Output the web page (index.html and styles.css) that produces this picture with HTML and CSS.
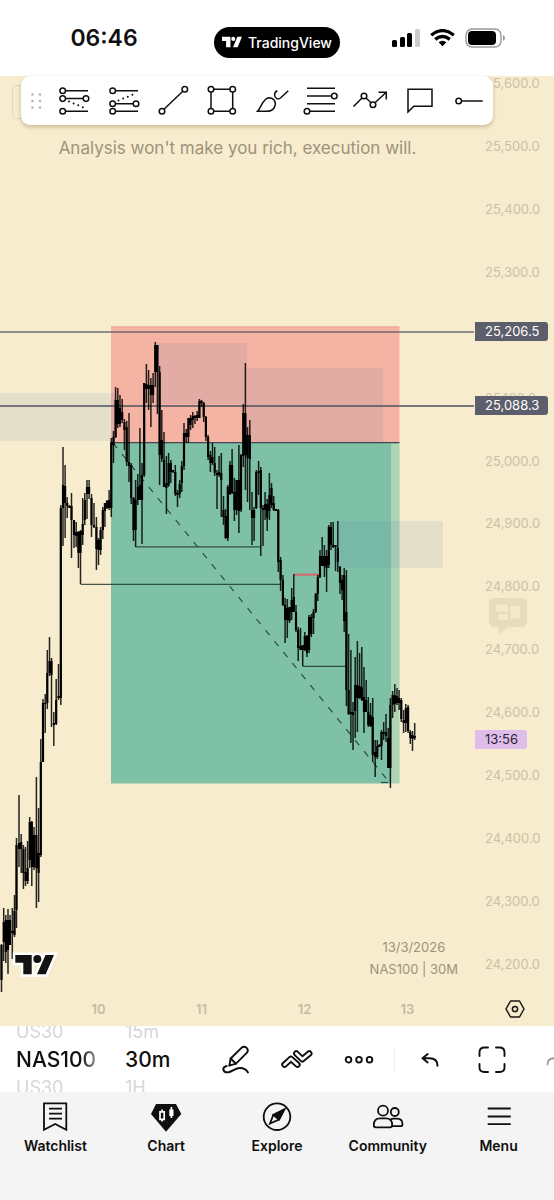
FILE: index.html
```html
<!DOCTYPE html>
<html lang="en">
<head>
    <meta charset="UTF-8">
    <meta name="viewport" content="width=device-width, initial-scale=1.0">
    <title>NAS100 30m</title>
    <link rel="stylesheet" href="styles.css">
</head>
<body>
    <header class="status-bar">
        <div class="clock">06:46</div>
        <div class="island">
            <svg width="20" height="12" viewBox="0 0 39 20" fill="#fff">
                <path d="M0 0H16.500V20H8V8H0Z"/>
                <circle cx="22" cy="4" r="4"/>
                <path d="M30 0H39L30.500 20H21.500Z"/>
            </svg>
            <span>TradingView</span>
        </div>
        <div class="signals">
            <svg width="28" height="18" viewBox="0 0 28 18">
                <rect x="0" y="11" width="5" height="7" rx="1.500"/>
                <rect x="8" y="8" width="5" height="10" rx="1.500"/>
                <rect x="15" y="4" width="5" height="14" rx="1.500"/>
                <rect x="23" y="0" width="5" height="18" rx="1.500" fill="#ccc"/>
            </svg>
            <svg width="25" height="18" viewBox="0 0 25 18" fill="none" stroke="#000" stroke-width="3.300">
                <path d="M1.200 6.200Q12.500 -3 23.800 6.200"/>
                <path d="M5.200 10.400Q12.500 4.600 19.800 10.400"/>
                <path d="M8.600 13.300Q12.500 10.200 16.400 13.300L12.500 17.300Z" fill="#000" stroke="none"/>
            </svg>
            <svg width="40" height="20" viewBox="0 0 40 20">
                <rect x="1" y="1" width="35" height="18" rx="6" fill="none" stroke="#999" stroke-width="1.400"/>
                <rect x="3" y="3" width="28" height="14" rx="4"/>
                <path d="M38 7Q40 8 40 10T38 13Z" fill="#999"/>
            </svg>
        </div>
    </header>

    <main class="chart">
        <div class="plot">
            <svg class="plot-canvas" viewBox="0 76 475 916">
                <!-- short position -->
                <rect x="111" y="326.500" width="288.500" height="116" fill="#f5b3a3"/>
                <path d="M111 327H399.500" stroke="#f3a093"/>
                <rect x="111" y="443" width="280" height="340.500" fill="#7fc1a6"/>
                <rect x="391" y="443" width="8.500" height="340.500" fill="#aed4b6"/>
                <!-- supply zones -->
                <g fill="rgb(60, 110, 170)" fill-opacity="0.1">
                    <rect x="0" y="393" width="115" height="48"/>
                    <rect x="157" y="343" width="90" height="61"/>
                    <rect x="247" y="368" width="136" height="74"/>
                    <rect x="338" y="521" width="105" height="47"/>
                </g>
                <!-- levels -->
                <path d="M0 332H474" stroke="#50505e" stroke-opacity="0.800" stroke-width="1.600"/>
                <path d="M0 406H474" stroke="#50505e" stroke-width="1.300"/>
                <path d="M111 442.600H399.500" stroke="#434651" stroke-width="1.300"/>
                <path d="M80.500 584.300H281M135.500 546.800H261M302.700 666.300H346" fill="none" stroke="#1b3129" stroke-opacity="0.800" stroke-width="1.200"/>
                <path d="M294 574.600H319" stroke="#cf6a70" stroke-width="2.200"/>
                <path d="M113 443L390 783" stroke="#2c4d43" stroke-width="1.200" stroke-dasharray="6.500 7.700"/>
                <path d="M381 782.500H388" stroke="#2c4d43" stroke-width="1.200"/>
                <path id="wicks" fill="none" stroke="#000" stroke-opacity="0.850" stroke-width="1.500"/>
                <path id="bodies" fill="none" stroke="#000" stroke-width="2.200"/>
                <!-- logo -->
                <g stroke-linejoin="miter">
                    <path d="M15.300 955H31.700V974.300H23.300V962.700H15.300ZM45.500 955H54L45.700 974.300H37Z" fill="#fff" stroke="#fff" stroke-width="5"/>
                    <circle cx="37.300" cy="959" r="6.500" fill="#fff"/>
                    <path d="M15.300 955H31.700V974.300H23.300V962.700H15.300ZM45.500 955H54L45.700 974.300H37Z" fill="#131313"/>
                    <circle cx="37.300" cy="959" r="4" fill="#131313"/>
                </g>
            </svg>
            <p class="motto">Analysis won't make you rich, execution will.</p>
            <p class="stamp">13/3/2026<br>NAS100 | 30M</p>
        </div>

        <div class="price-axis">
            <ul class="prices">
                <li>25,600.0</li>
                <li>25,500.0</li>
                <li>25,400.0</li>
                <li>25,300.0</li>
                <li>25,200.0</li>
                <li>25,100.0</li>
                <li>25,000.0</li>
                <li>24,900.0</li>
                <li>24,800.0</li>
                <li>24,700.0</li>
                <li>24,600.0</li>
                <li>24,500.0</li>
                <li>24,400.0</li>
                <li>24,300.0</li>
                <li>24,200.0</li>
            </ul>
            <span class="tag tag-high">25,206.5</span>
            <span class="tag tag-low">25,088.3</span>
            <span class="tag tag-countdown">13:56</span>
            <button class="ideas" aria-label="Ideas">
                <svg width="38" height="36" viewBox="0 0 38 36">
                    <path d="M6 0H32Q38 0 38 6V23Q38 29 32 29H19L11 36L8.500 29H6Q0 29 0 23V6Q0 0 6 0Z" fill="#e7dcbe"/>
                    <path d="M7 6.500H19V13.500H7ZM21.500 8H31V20.500H21.500ZM9.500 16H19V22H9.500Z" fill="#f4e9cb"/>
                </svg>
            </button>
        </div>

        <div class="time-axis">
            <span>10</span>
            <span>11</span>
            <span>12</span>
            <span>13</span>
        </div>
        <button class="axis-settings" aria-label="Chart settings">
            <svg width="20" height="18" viewBox="0 0 20 18" fill="none" stroke="#1a1710" stroke-width="1.500">
                <path d="M5.500 1H14.500L19 9L14.500 17H5.500L1 9Z" stroke-linejoin="round"/>
                <circle cx="10" cy="9" r="2.600"/>
            </svg>
        </button>

        <div class="ghost"></div>
        <div class="draw-tools">
            <svg class="grip" width="10" height="16" viewBox="0 0 10 16" fill="#b5b5b5">
                <circle cx="1.500" cy="1.500" r="1.300"/><circle cx="9" cy="1.500" r="1.300"/>
                <circle cx="1.500" cy="8" r="1.300"/><circle cx="9" cy="8" r="1.300"/>
                <circle cx="1.500" cy="14.500" r="1.300"/><circle cx="9" cy="14.500" r="1.300"/>
            </svg>
            <button class="tool" aria-label="Short position">
                <svg viewBox="0 0 32 32">
                    <path d="M7.500 5.700H30M7.500 13.600H25.200M7.500 26.300H30"/>
                    <path d="M11 16.500L29 24" class="dots"/>
                    <circle cx="4.700" cy="5.700" r="2.800"/><circle cx="4.700" cy="13.600" r="2.800"/>
                    <circle cx="28" cy="13.600" r="2.800"/><circle cx="4.700" cy="26.300" r="2.800"/>
                </svg>
            </button>
            <button class="tool" aria-label="Long position">
                <svg viewBox="0 0 32 32">
                    <path d="M7.500 5.700H30M7.500 18.700H25.200M7.500 26.300H30"/>
                    <path d="M10.500 15.500L29 8" class="dots"/>
                    <circle cx="4.700" cy="5.700" r="2.800"/><circle cx="4.700" cy="18.700" r="2.800"/>
                    <circle cx="28" cy="18.700" r="2.800"/><circle cx="4.700" cy="26.300" r="2.800"/>
                </svg>
            </button>
            <button class="tool" aria-label="Trend line">
                <svg viewBox="0 0 32 32">
                    <path d="M7 24.300L25.800 6.300"/>
                    <circle cx="5" cy="26.300" r="2.800"/><circle cx="27.800" cy="4.300" r="2.800"/>
                </svg>
            </button>
            <button class="tool" aria-label="Rectangle">
                <svg viewBox="0 0 32 32">
                    <path d="M7.800 4.300H24M7.800 26.300H24M5 7.100V23.500M26.700 7.100V23.500"/>
                    <circle cx="5" cy="4.300" r="2.800"/><circle cx="26.700" cy="4.300" r="2.800"/>
                    <circle cx="5" cy="26.300" r="2.800"/><circle cx="26.700" cy="26.300" r="2.800"/>
                </svg>
            </button>
            <button class="tool" aria-label="Brush">
                <svg viewBox="0 0 32 32">
                    <path d="M1.500 26.300C5.500 22 7 13 13 12.700C17 12.700 19.800 16 19.300 19.500C18.500 24 15 26.300 11 26.300Z"/>
                    <path d="M21.300 5.700C17.500 7.500 18 12 20.800 13.600Q22.500 14.600 24.500 13L32.300 5.700"/>
                </svg>
            </button>
            <button class="tool" aria-label="Fib retracement">
                <svg viewBox="0 0 32 32">
                    <path d="M2 3.300H30M2 11H26.500M2 18.700H30M4.800 26.300H30"/>
                    <circle cx="29.300" cy="11" r="2.800"/><circle cx="2" cy="26.300" r="2.800"/>
                </svg>
            </button>
            <button class="tool" aria-label="Path">
                <svg viewBox="0 0 32 32">
                    <path d="M-0.500 21.500L8 13M12 13L17 17.700M21 17.700L32 7.500M24.500 7.300H32.300V14.500"/>
                    <circle cx="10" cy="11" r="2.800"/><circle cx="19" cy="19.700" r="2.800"/>
                </svg>
            </button>
            <button class="tool" aria-label="Comment">
                <svg viewBox="0 0 32 32">
                    <path d="M4 4.300H28V21.300H9.800L4 27Z"/>
                </svg>
            </button>
            <button class="tool" aria-label="Horizontal ray">
                <svg viewBox="0 0 32 32">
                    <path d="M8.500 16H29.700"/>
                    <circle cx="5.700" cy="16" r="2.800"/>
                </svg>
            </button>
        </div>
    </main>

    <section class="bottom-tools">
        <div class="wheel wheel-symbol">
            <span>US30</span>
            <strong>NAS100</strong>
            <span>US30</span>
        </div>
        <div class="wheel wheel-interval">
            <span>15m</span>
            <strong>30m</strong>
            <span>1H</span>
        </div>
        <button class="action" aria-label="Draw">
            <svg viewBox="0 0 32 32">
                <path d="M10.300 21.700L11.700 14.500L22.700 3.600Q25.200 1.700 27.700 3.900Q29.800 6.200 28 8.700L17 19.700Z"/>
                <path d="M11.700 14.500L17 19.700"/>
                <path d="M7.700 22Q4 23 4.300 25.500Q5 29 9.500 28.300C14 27.500 16 24 21 24Q26.500 24 29 28.500"/>
            </svg>
        </button>
        <button class="action" aria-label="Indicators">
            <svg viewBox="0 0 32 32" class="chevrons">
                <path d="M3.500 20.700L9.900 14.800L16.500 20.700" class="outer"/>
                <path d="M3.500 20.700L9.900 14.800L16.500 20.700" class="inner"/>
                <path d="M15.300 9.500L21.300 15.300L28.300 9.500" class="outer"/>
                <path d="M15.300 9.500L21.300 15.300L28.300 9.500" class="inner"/>
            </svg>
        </button>
        <button class="action" aria-label="More">
            <svg viewBox="0 0 32 32">
                <circle cx="5.500" cy="15.700" r="2.800"/><circle cx="16" cy="15.700" r="2.800"/><circle cx="26.500" cy="15.700" r="2.800"/>
            </svg>
        </button>
        <div class="divider"></div>
        <button class="action" aria-label="Undo">
            <svg viewBox="0 0 32 32">
                <path d="M13.700 10L8.500 14.300L13.700 18.500M8.500 14.300H15.500Q23.500 14.300 23.500 21.800"/>
            </svg>
        </button>
        <button class="action" aria-label="Full screen">
            <svg viewBox="0 0 32 32">
                <path d="M3.500 12V8.500Q3.500 3.500 8.500 3.500H12M20 3.500H23.500Q28.500 3.500 28.500 8.500V12M28.500 20V23.500Q28.500 28 23.500 28H20M12 28H8.500Q3.500 28 3.500 23.500V20"/>
            </svg>
        </button>
        <button class="action action-fade" aria-label="Redo">
            <svg viewBox="0 0 32 32">
                <path d="M18.300 10L23.500 14.300L18.300 18.500M23.500 14.300H16.500Q9.500 14.300 9.500 20.500"/>
            </svg>
        </button>
    </section>

    <nav class="tabs">
        <a href="#watchlist" class="tab">
            <svg viewBox="0 0 32 32">
                <path d="M5 2.300H27.300V28.700L16.200 23L5 28.700Z"/>
                <path d="M10 7.700H23M10 12.700H23M10 17.700H23"/>
            </svg>
            <span>Watchlist</span>
        </a>
        <a href="#chart" class="tab">
            <svg viewBox="0 0 32 32">
                <path d="M6 3H26L31.300 13L16 30.700L1 13Z" fill="#0f0f0f" stroke="none"/>
                <path d="M10 10.800H14.200V18.300H10ZM12.100 8.500V10.800M12.100 18.300V20.600M21.400 6V17" stroke="#fff" stroke-width="1.700"/>
                <rect x="19.300" y="8.500" width="4.200" height="6.500" fill="#fff" stroke="none"/>
            </svg>
            <span>Chart</span>
        </a>
        <a href="#explore" class="tab">
            <svg viewBox="0 0 32 32">
                <circle cx="16" cy="15.700" r="13.300"/>
                <path d="M23.200 8.500L12.300 14L9 22.500L18 18.500Z"/>
                <path d="M23.200 8.500L12.300 14L18 18.500Z" fill="#0f0f0f"/>
            </svg>
            <span>Explore</span>
        </a>
        <a href="#community" class="tab">
            <svg viewBox="0 0 32 32">
                <circle cx="11" cy="9.700" r="5"/>
                <circle cx="22.800" cy="11" r="4"/>
                <path d="M8 17.300H14Q20.200 17.300 20.200 24Q20.200 26.300 18 26.300H4Q1.800 26.300 1.800 24Q1.800 17.300 8 17.300Z"/>
                <path d="M18.500 18.500Q20 17.700 21.500 17.700H25Q30.500 17.700 30.500 23.200Q30.500 25.200 28.500 25.200H20"/>
            </svg>
            <span>Community</span>
        </a>
        <a href="#menu" class="tab">
            <svg viewBox="0 0 32 32">
                <path d="M4.700 7.500H27.700M4.700 15.500H27.700M4.700 23.200H27.700"/>
            </svg>
            <span>Menu</span>
        </a>
    </nav>

    <script src="chart.js"></script>
</body>
</html>
```
FILE: styles.css
```css
* {
    box-sizing: border-box;
}

body {
    margin: 0;
    min-height: 100vh;
    display: flex;
    flex-direction: column;
    font-family: Inter, "Liberation Sans", sans-serif;
    background: #f4f4f4;
    color: #0f0f0f;
}

button {
    padding: 0;
    border: none;
    background: none;
    color: inherit;
    font: inherit;
    cursor: pointer;
}

svg {
    display: block;
}

/* Status bar */
.status-bar {
    display: grid;
    grid-template-columns: 1fr auto 1fr;
    align-items: center;
    height: 76px;
    background: #fff;
}

.clock {
    padding-right: 6px;
    text-align: center;
    font-size: 23px;
    font-weight: 600;
}

.island {
    display: flex;
    align-items: center;
    gap: 6px;
    height: 31px;
    margin-top: 8px;
    padding: 0 8px;
    border-radius: 16px;
    background: #000;
    color: #fff;
    font-size: 14px;
    font-weight: 500;
}

.signals {
    display: flex;
    align-items: center;
    justify-content: center;
    gap: 10px;
    padding-left: 4px;
}

/* Chart */
.chart {
    position: relative;
    display: grid;
    grid-template-columns: 1fr 79px;
    background: #f7eccd;
}

.plot {
    position: relative;
}

.plot-canvas {
    width: 100%;
    height: auto;
}

.motto,
.stamp {
    position: absolute;
    margin: 0;
    text-align: center;
    color: #9d937b;
}

.motto {
    top: 61px;
    left: 0;
    right: 0;
    font-size: 17px;
    line-height: 22px;
}

.stamp {
    right: 17px;
    bottom: 12px;
    font-size: 13px;
    line-height: 22px;
}

.price-axis {
    position: relative;
}

.prices {
    display: flex;
    flex-direction: column;
    justify-content: space-between;
    height: 100%;
    margin: 0;
    padding: 0 0 21px 10px;
    list-style: none;
    color: #cbc1a5;
    font-size: 13px;
    line-height: 14px;
}

.tag {
    position: absolute;
    left: 0;
    height: 19px;
    padding: 0 9px 0 10px;
    border-radius: 0 3px 3px 0;
    background: #5d5e6b;
    color: #fff;
    font-size: 13px;
    line-height: 18px;
}

.tag-high {
    top: 246px;
}

.tag-low {
    top: 320px;
}

.tag-countdown {
    top: 654px;
    background: #dfbdea;
    color: #2a2430;
}

.ideas {
    position: absolute;
    top: 522px;
    left: 14px;
}

.time-axis {
    display: grid;
    grid-template-columns: repeat(4, 1fr);
    align-items: center;
    height: 34px;
    padding: 0 16px 0 47px;
    text-align: center;
    color: #c6bc9f;
    font-size: 13px;
    font-weight: 600;
}

.axis-settings {
    display: flex;
    align-items: center;
    justify-content: center;
}

/* Drawing toolbar */
.ghost {
    position: absolute;
    top: 9px;
    left: 12px;
    width: 40px;
    height: 34px;
    border: 1px solid #e0d7be;
    border-radius: 5px;
}

.draw-tools {
    position: absolute;
    top: 0;
    left: 21px;
    right: 61px;
    display: flex;
    align-items: center;
    justify-content: space-between;
    height: 49px;
    padding: 0 8px 0 10px;
    border-radius: 9px;
    background: #fff;
    box-shadow: 0 2px 4px rgba(90, 75, 30, 0.3);
}

.tool svg,
.action svg,
.tab svg {
    width: 32px;
    height: 32px;
    overflow: visible;
    fill: none;
    stroke: #0f0f0f;
    stroke-width: 1.4;
}

.tool svg {
    stroke-width: 1.5;
}

.tool .dots {
    stroke-width: 2;
    stroke-linecap: round;
    stroke-dasharray: 0 5;
}

/* Bottom toolbar */
.bottom-tools {
    display: flex;
    align-items: center;
    height: 66px;
    padding: 2px 0 0 16px;
    overflow: hidden;
    background: #fff;
}

.wheel {
    display: flex;
    flex-direction: column;
    line-height: 28px;
}

.wheel span {
    color: #d6d6d6;
    font-size: 18px;
}

.wheel strong {
    font-size: 21px;
    font-weight: 500;
}

.wheel-symbol {
    flex: 0 0 81px;
    margin-right: 28px;
    overflow: hidden;
    -webkit-mask-image: linear-gradient(90deg, #000 80%, rgba(0, 0, 0, 0.4));
    mask-image: linear-gradient(90deg, #000 80%, rgba(0, 0, 0, 0.4));
}

.wheel-interval {
    flex: 1 0 78px;
}

.action {
    display: flex;
    flex: 0 0 62px;
    justify-content: center;
}

.action svg {
    stroke-width: 1.9;
    stroke-linecap: round;
    stroke-linejoin: round;
}

.chevrons .outer {
    stroke-width: 6.4;
}

.chevrons .inner {
    stroke: #fff;
    stroke-width: 2.6;
}

.divider {
    flex: 0 0 1px;
    height: 24px;
    margin: 0 4px;
    background: #ededed;
}

.action-fade {
    margin-right: -31px;
    opacity: 0.4;
}

/* Tabs */
.tabs {
    display: grid;
    grid-template-columns: repeat(5, 1fr);
    padding: 9px 0 44px;
}

.tab {
    display: flex;
    flex-direction: column;
    align-items: center;
    gap: 3px;
    color: inherit;
    font-size: 14px;
    font-weight: 600;
    line-height: 20px;
    text-decoration: none;
}

.tab svg {
    stroke-width: 1.8;
}
```
FILE: chart.js
```js
// x, high, low, body top, body bottom
const candles = [
    [1.5, 944, 992, 945, 980], [3.7, 908, 961, 922, 942], [5.8, 915, 963, 920, 952], [8, 909, 974, 920, 950],
    [10, 915, 943, 920, 945], [12.3, 908, 959, 931, 933], [14.5, 895, 937, 911, 935], [16.5, 838, 928, 845, 910],
    [19, 795, 867, 843, 849], [21.2, 834, 873, 842, 849], [23.4, 845, 889, 849, 873], [25.5, 847, 886, 872, 881],
    [27.6, 841, 884, 868, 881], [29.7, 817, 868, 822, 860], [31.8, 821, 886, 822, 867], [34, 827, 870, 835, 867],
    [36.4, 777, 908, 835, 868], [38.6, 808, 902, 853, 873], [40.8, 739, 857, 762, 855], [43, 699, 762, 703, 762],
    [45.2, 694, 733, 703, 704], [47.3, 650, 709, 673, 703], [49.5, 637, 676, 661, 673], [51.5, 658, 727, 661, 675],
    [53.8, 712, 746, 723, 725], [56.2, 679, 725, 700, 724], [58.5, 664, 700, 696, 698], [60.8, 505, 705, 508, 698],
    [63, 447, 546, 485, 508], [65.1, 465, 538, 486, 503], [67.2, 497, 518, 503, 506], [69.4, 505, 508, 506, 508],
    [71.5, 493, 558, 506, 520], [74, 520, 548, 520, 535], [76.2, 522, 547, 532, 536], [78.4, 531, 568, 532, 553],
    [80.5, 530, 584, 531, 553], [82.7, 498, 545, 524, 535], [84.8, 493, 525, 500, 520], [87, 480, 519, 487, 494],
    [89.1, 480, 499, 487, 494], [91.5, 494, 537, 498, 525], [94, 503, 528, 525, 527], [96.4, 517, 570, 527, 549],
    [98.5, 538, 565, 540, 550], [100.6, 527, 555, 530, 550], [102.8, 507, 539, 510, 530], [104.9, 503, 527, 503, 511],
    [107, 500, 509, 501, 508], [109.1, 490, 510, 500, 508], [111.3, 438, 517, 442, 508], [113.5, 431, 463, 437, 445],
    [115.6, 387, 438, 400, 437], [117.8, 388, 428, 400, 424], [120, 395, 427, 408, 424], [122.2, 399, 423, 412, 420],
    [124.4, 419, 450, 422, 430], [126.7, 421, 466, 427, 462], [129, 413, 482, 462, 466], [131.2, 463, 504, 465, 498],
    [133.5, 497, 541, 498, 530], [135.6, 480, 547, 500, 530], [137.8, 474, 505, 487, 500], [139.9, 428, 500, 485, 500],
    [142, 463, 544, 475, 500], [144.2, 383, 477, 383, 475], [146.4, 364, 403, 384, 389], [148.6, 370, 410, 385, 389],
    [150.9, 378, 427, 385, 395], [153.1, 373, 403, 385, 395], [155.3, 342, 387, 345, 372], [157.4, 345, 414, 345, 372],
    [159.6, 366, 485, 372, 455], [161.8, 410, 462, 440, 459], [164, 432, 487, 460, 487], [166.4, 456, 514, 483, 488],
    [168.6, 453, 487, 463, 485], [170.8, 460, 483, 463, 472], [173, 470, 473, 470, 472], [175.3, 465, 496, 472, 494],
    [177.5, 490, 507, 493, 495], [179.7, 480, 498, 484, 494], [181.8, 461, 492, 466, 483], [184, 423, 470, 433, 466],
    [186.2, 429, 443, 433, 437], [188.4, 424, 443, 418, 437], [190.6, 415, 430, 418, 425], [192.8, 412, 428, 416, 420],
    [195, 415, 424, 416, 418], [197.2, 411, 421, 415, 418], [199.4, 399, 418, 401, 418], [201.5, 400, 407, 401, 403],
    [203.7, 402, 422, 403, 417], [205.9, 416, 441, 417, 437], [208.1, 435, 460, 437, 457], [210.4, 451, 472, 455, 463],
    [212.5, 443, 465, 457, 463], [214.7, 447, 476, 463, 473], [217, 470, 509, 473, 475], [219.1, 456, 477, 472, 475],
    [221.3, 453, 517, 473, 480], [223.5, 496, 525, 510, 517], [225.6, 509, 539, 516, 538], [227.8, 485, 541, 487, 538],
    [230, 461, 495, 465, 494], [232.1, 449, 494, 465, 493], [234.4, 478, 521, 492, 510], [236.6, 480, 515, 480, 510],
    [238.9, 445, 533, 480, 511], [241, 454, 512, 455, 510], [243.3, 404, 467, 413, 456], [245.4, 363, 490, 413, 455],
    [247.5, 427, 502, 435, 458], [249.8, 420, 510, 435, 459], [252, 492, 545, 510, 518], [254.1, 507, 541, 510, 518],
    [256.3, 470, 509, 472, 508], [258.6, 461, 495, 471, 473], [260.8, 467, 556, 470, 508], [263, 505, 546, 508, 510],
    [265.1, 492, 520, 504, 510], [267.2, 499, 531, 504, 518], [269.4, 473, 520, 495, 511], [271.5, 483, 508, 488, 505],
    [273.7, 496, 511, 503, 510], [276, 509, 511, 509, 511], [278.3, 509, 572, 510, 562], [280.6, 557, 591, 560, 580],
    [282.9, 575, 606, 580, 605], [285.1, 598, 643, 605, 620], [287.3, 599, 638, 608, 620], [289.5, 607, 623, 607, 621],
    [291.7, 588, 620, 600, 612], [293.8, 574, 612, 597, 612], [296, 605, 632, 612, 630], [298.2, 627, 661, 630, 648],
    [300.5, 628, 650, 646, 650], [302.7, 645, 666, 645, 650], [304.8, 632, 651, 636, 650], [307, 635, 657, 636, 653],
    [309.1, 615, 653, 617, 650], [311.3, 614, 637, 617, 634], [313.5, 609, 634, 612, 618], [315.7, 593, 613, 594, 612],
    [317.8, 575, 601, 577, 594], [320, 550, 578, 556, 577], [322.2, 537, 566, 556, 566], [324.4, 545, 577, 556, 566],
    [326.6, 550, 592, 556, 568], [328.8, 525, 568, 527, 565], [331, 522, 550, 527, 545], [333.2, 522, 548, 545, 547],
    [335.5, 545, 571, 545, 547], [337.8, 521, 572, 548, 562], [340, 566, 594, 567, 583], [342.1, 575, 600, 580, 590],
    [344.2, 568, 632, 575, 621], [346.4, 570, 706, 612, 690], [348.6, 634, 715, 690, 714], [350.9, 650, 743, 712, 714],
    [353, 702, 750, 712, 715], [355.2, 657, 738, 685, 711], [357.4, 641, 732, 685, 698], [359.6, 653, 699, 686, 698],
    [361.8, 647, 701, 687, 700], [364, 667, 733, 697, 712], [366.2, 680, 712, 700, 712], [368.3, 697, 727, 712, 725],
    [370.5, 703, 727, 715, 726], [372.7, 698, 762, 717, 755], [375.2, 740, 777, 752, 757], [377.3, 740, 759, 746, 757],
    [379.4, 744, 747, 745, 747], [381.5, 730, 760, 732, 746], [383.7, 722, 740, 732, 734], [386, 714, 742, 732, 736],
    [388.2, 728, 768, 738, 768], [390.4, 698, 788, 705, 768], [392.6, 691, 718, 695, 705], [394.8, 684, 712, 695, 704],
    [397, 688, 705, 696, 703], [399.1, 690, 710, 698, 703], [401.3, 698, 722, 700, 719], [403.6, 710, 733, 720, 723],
    [405.8, 704, 732, 708, 723], [408.1, 705, 733, 707, 731], [410.3, 730, 744, 732, 738], [412.5, 731, 751, 735, 739],
    [414.7, 723, 740, 736, 738]
];

function drawCandles() {
    const wicks = candles.map(([x, high, low]) => `M${x} ${high}V${low}`).join('');
    const bodies = candles.map(([x, , , top, bottom]) => `M${x} ${top}V${bottom}`).join('');
    document.getElementById('wicks').setAttribute('d', wicks);
    document.getElementById('bodies').setAttribute('d', bodies);
}

drawCandles();
```
